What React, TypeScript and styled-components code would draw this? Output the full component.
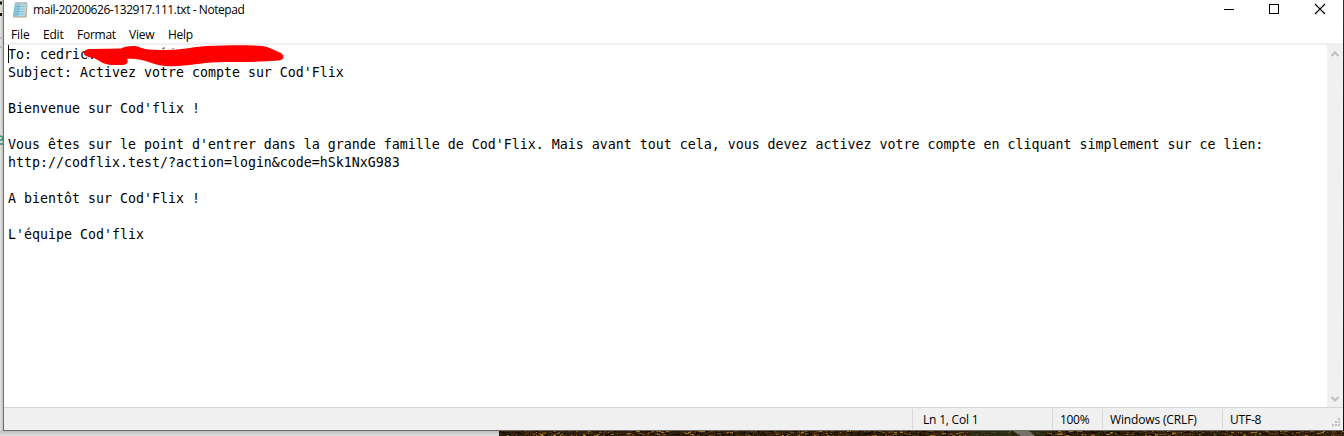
import React from "react";
import styled, { createGlobalStyle } from "styled-components";

const GlobalStyle = createGlobalStyle`
  html, body { margin: 0; padding: 0; overflow: hidden; }
  * { box-sizing: border-box; }
`;

const Desktop = styled.div`
  display: grid;
  grid-template-columns: 3px 1340px 1px;
  grid-template-rows: 431px 5px;
  width: 1344px;
  height: 436px;
  overflow: hidden;
  background: #dcdcdc;
  font-family: "Open Sans", "Noto Sans", sans-serif;
  font-size: 12px;
  color: #000;
`;

const BehindLeft = styled.div`
  background: linear-gradient(90deg, #e2e2e0, #c4c4c2);
  overflow: hidden;
`;

const BehindRight = styled.div`
  background: linear-gradient(#3a3026, #15110c 30%, #2b2012 60%, #171009);
`;

const BehindBottom = styled.div`
  grid-column: 1 / -1;
  display: flex;
  background: linear-gradient(#bdbdbd, #dedede);
`;

const Photo = styled.svg`
  display: block;
  margin-left: 499px;
`;

const Window = styled.div`
  display: flex;
  flex-direction: column;
  background: #fff;
  border-left: 1px solid #6c6c6c;
  border-bottom: 1px solid #6c6c6c;
`;

const TitleBar = styled.header`
  display: flex;
  align-items: center;
  height: 20px;
  padding-left: 8px;
`;

const Label = styled.span<{ $w: number; $ls?: number }>`
  display: inline-block;
  width: ${(p) => p.$w}px;
  letter-spacing: ${(p) => p.$ls ?? 0}px;
  white-space: nowrap;
  line-height: 18px;
`;

const Title = styled(Label)`
  margin-left: 5px;
`;

const Controls = styled.svg`
  display: block;
  margin-left: auto;
`;

const MenuBar = styled.nav`
  display: flex;
  align-items: center;
  height: 25px;
  padding: 6px 0 0 7px;
  border-bottom: 2px solid #f0f0f0;
`;

const Body = styled.main`
  display: flex;
  flex: 1;
  min-height: 0;
`;

const Editor = styled.div`
  position: relative;
  flex: 1;
  padding: 1px 0 0 4px;
  font-family: "DejaVu Sans Mono", monospace;
  font-size: 13.29px;
  line-height: 18px;
`;

const Line = styled.div`
  height: 18px;
  white-space: pre;
`;

const Caret = styled.span`
  position: absolute;
  left: 4px;
  top: 0;
  width: 1px;
  height: 18px;
  background: #000;
`;

const Redaction = styled.svg`
  position: absolute;
  left: 76px;
  top: -5px;
`;

const ScrollBar = styled.div`
  display: flex;
  flex-direction: column;
  justify-content: space-between;
  width: 16px;
  background: #f0f0f0;
`;

const StatusBar = styled.footer`
  display: flex;
  height: 23px;
  border-top: 1px solid #d7d7d7;
  background: #f0f0f0;
`;

const StatusCell = styled.div<{ $w: number; $pad: number }>`
  width: ${(p) => p.$w}px;
  height: 20px;
  margin-top: 1px;
  padding: 2px 0 0 ${(p) => p.$pad}px;
  border-left: 1px solid #d7d7d7;
`;

const Spacer = styled.div`
  flex: 1;
`;

const Grip = styled.svg`
  display: block;
  align-self: flex-end;
`;

const menus = [
  { name: "File", w: 32, ls: -0.1 },
  { name: "Edit", w: 34, ls: -0.2 },
  { name: "Format", w: 52, ls: -0.25 },
  { name: "View", w: 39, ls: -0.2 },
  { name: "Help", w: 30, ls: -0.25 },
];

const lines = [
  "To: cedric.",
  "Subject: Activez votre compte sur Cod'Flix",
  "",
  "Bienvenue sur Cod'flix !",
  "",
  "Vous êtes sur le point d'entrer dans la grande famille de Cod'Flix. Mais avant tout cela, vous devez activez votre compte en cliquant simplement sur ce lien:",
  "http://codflix.test/?action=login&code=hSk1NxG983",
  "",
  "A bientôt sur Cod'Flix !",
  "",
  "L'équipe Cod'flix",
];

const leafColors = ["#100a05", "#241808", "#3a280c", "#55390f", "#2a2a12", "#744f16", "#180d06", "#5a2c0e", "#a07426", "#37200c"];

let seed = 20200626;
const random = () => {
  seed = (Math.imul(seed, 1664525) + 1013904223) >>> 0;
  return seed / 4294967296;
};

const leaves = Array.from({ length: 1500 }, () => ({
  x: Math.floor(random() * 845),
  y: Math.floor(random() * 5),
  w: 1 + Math.floor(random() * 4),
  fill: leafColors[Math.floor(random() * leafColors.length)],
}));

function NotepadIcon() {
  return (
    <svg width="16" height="18" viewBox="0 0 16 18">
      <path d="M4 2.500h11.500L14.500 16.500H1z" fill="#b5a078" />
      <path d="M3 2h12L13.200 15.500H.8z" fill="#b4dbe8" />
      <path d="M3 2h6L6.500 15.500H.8z" fill="#8cc6d8" />
      <path d="M3 5.500h10M2.600 8h10M2.200 10.500h10M1.800 13h10" stroke="#6fb0c6" strokeWidth=".6" />
      <path d="M2.700 2.500h12" stroke="#e9eff0" strokeWidth="2" />
      <path d="M4 1v2.500M6 1v2.500M8 1v2.500M10 1v2.500M12 1v2.500M14 1v2.500" stroke="#66777d" strokeWidth=".8" />
    </svg>
  );
}

export default function App() {
  return (
    <Desktop>
      <GlobalStyle />
      <BehindLeft>
        <svg width="3" height="431">
          <path d="M0 3h2M0 14.500h2" stroke="#111" strokeWidth="3" />
          <path d="M0 38h2M0 47h2" stroke="#9292a0" strokeWidth="1" />
          <path d="M0 136q3 0 3 4H0M0 144h3" stroke="#2c8b68" strokeWidth="1.300" fill="none" />
        </svg>
      </BehindLeft>
      <Window>
        <TitleBar>
          <NotepadIcon />
          <Title $w={230} $ls={-0.44}>mail-20200626-132917.111.txt - Notepad</Title>
          <Controls width="120" height="20" fill="none" stroke="#000" shapeRendering="crispEdges">
            <path d="M1 9.500h10" />
            <rect x="46.500" y="4.500" width="9" height="9" />
            <path d="M92 4l10 10M102 4l-10 10" shapeRendering="auto" strokeWidth="1.100" />
          </Controls>
        </TitleBar>
        <MenuBar>
          {menus.map((m) => (
            <Label key={m.name} $w={m.w} $ls={m.ls}>{m.name}</Label>
          ))}
        </MenuBar>
        <Body>
          <Editor>
            {lines.map((t, i) => (
              <Line key={i}>{t}</Line>
            ))}
            <Caret />
            <Redaction width="210" height="30" viewBox="80 40 210 30">
              <path
                fill="#f00"
                d="M84 52C85 49.500 88 49 92 49L121 48.500C125 46 135 45 140 47.500C146 50 157 50 166 50C181 50 191 47 207 46C228 45 250 45 262 46C270 47 276 51 281 53C285 56 284 60 279 60.500C260 62 239 62 224 62C205 62 195 65 178 66C164 67 157 65 149 62C142 60 134 58 127 59C129 62 127 65 123 65L112 65C104 65 100 61 94 58C88 57 83 56 84 52Z"
              />
              <path d="M159 58.500h2M162 59.500h4" stroke="#9c1010" strokeWidth=".6" />
              <path d="M163 49.500v-1.500h2M173 49v-1" stroke="#222" strokeWidth=".8" fill="none" />
            </Redaction>
          </Editor>
          <ScrollBar>
            <svg width="16" height="17" fill="none" stroke="#bfbfbf" strokeWidth="2">
              <path d="M4.500 11L8 7.500l3.500 3.500" />
            </svg>
            <svg width="16" height="17" fill="none" stroke="#bfbfbf" strokeWidth="2">
              <path d="M4.500 7L8 10.500L11.500 7" />
            </svg>
          </ScrollBar>
        </Body>
        <StatusBar>
          <Spacer />
          <StatusCell $w={140} $pad={10}><Label $w={70} $ls={-0.2}>Ln 1, Col 1</Label></StatusCell>
          <StatusCell $w={50} $pad={7}><Label $w={40} $ls={-0.3}>100%</Label></StatusCell>
          <StatusCell $w={120} $pad={7}><Label $w={100} $ls={-0.15}>Windows (CRLF)</Label></StatusCell>
          <StatusCell $w={104} $pad={7}><Label $w={50} $ls={-0.2}>UTF-8</Label></StatusCell>
          <Grip width="17" height="14" fill="#bfbfbf">
            <path d="M12 2h2v2h-2zM9 5h2v2H9zM12 5h2v2h-2zM6 8h2v2H6zM9 8h2v2H9zM12 8h2v2h-2z" />
          </Grip>
        </StatusBar>
      </Window>
      <BehindRight />
      <BehindBottom>
        <Photo width="845" height="5">
          <rect width="845" height="5" fill="#2c1d0a" />
          {leaves.map((l, i) => (
            <rect key={i} x={l.x} y={l.y} width={l.w} height="1" fill={l.fill} />
          ))}
          <rect x="470" width="75" height="5" fill="#2a3218" opacity=".6" />
          <path d="M514 0h16l6 5h-14z" fill="#77706a" />
        </Photo>
      </BehindBottom>
    </Desktop>
  );
}
